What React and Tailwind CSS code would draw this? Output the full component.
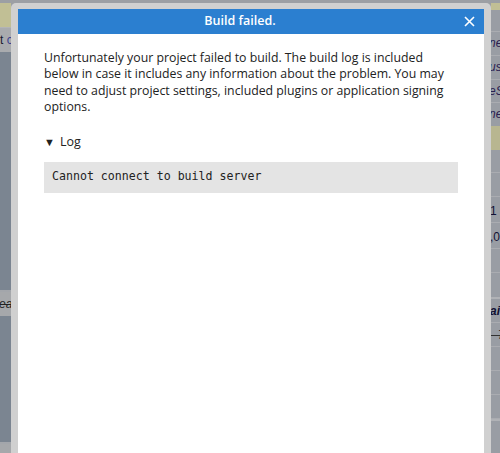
export default function App() {
  const leftRows = (
    <div className="w-[11px] shrink-0 flex flex-col overflow-hidden bg-[#7b8591]">
      <div className="h-[3px] bg-[#9c9fa4]" />
      <div className="h-[24px] bg-[#c1bf95]" />
      <div className="h-[1px] bg-[#b3b4b6]" />
      <div className="h-[24px] bg-[#a9abae] text-[12px] leading-[24px] whitespace-nowrap text-[#1a1a2e] font-['Liberation_Sans',sans-serif]">
        t <span className="text-[#3a3f8f]">c</span>
      </div>
      <div className="h-[238px]" />
      <div className="h-[2px] bg-[#a3a6ab]" />
      <div className="h-[24px] bg-[#a6a8ab] text-[12px] leading-[24px] whitespace-nowrap text-[#222] italic line-through font-['Liberation_Sans',sans-serif] -ml-[1px]">
        ea
      </div>
      <div className="h-[126px]" />
      <div className="h-[2px] bg-[#a3a6ab]" />
      <div className="flex-1 bg-[#a6a8ab]" />
    </div>
  );

  const rightRows = (
    <div className="w-[9px] shrink-0 flex flex-col overflow-hidden bg-[#999da4] text-[12px] italic whitespace-nowrap text-[#2a2050] font-['Liberation_Sans',sans-serif]">
      <div className="h-[3px] bg-[#9c9fa4]" />
      <div className="h-[7px] bg-[#c1bf95]" />
      <div className="h-[22px] border-b border-[#aaacb1]" />
      <div className="h-[24px] leading-[22px] border-b border-[#aaacb1] -ml-[2px]">ne</div>
      <div className="h-[24px] leading-[22px] border-b border-[#aaacb1] -ml-[2px]">us</div>
      <div className="h-[23px] leading-[22px] border-b border-[#aaacb1] -ml-[2px]">eS</div>
      <div className="h-[23px] leading-[22px] -ml-[2px]">ne</div>
      <div className="h-[24px] bg-[#b8b690]" />
      <div className="h-[23px] border-b border-[#aaacb1]" />
      <div className="h-[24px] border-b border-[#aaacb1]" />
      <div className="h-[26px] leading-[28px] not-italic border-b border-[#aaacb1] text-[#111133] -ml-[1px]">1</div>
      <div className="h-[26px] leading-[28px] not-italic border-b border-[#aaacb1] text-[#111133] -ml-[1px]">,0</div>
      <div className="h-[24px] border-b border-[#aaacb1]" />
      <div className="h-[24px]" />
      <div className="h-[2px] bg-[#b0b2b6]" />
      <div className="h-[24px] leading-[24px] font-bold border-b border-[#aaacb1] text-[#111133] -ml-[1px]">ai</div>
      <div className="h-[24px] leading-[24px] line-through border-b border-[#aaacb1] text-[#333] ">–7</div>
      <div className="h-[24px] border-b border-[#aaacb1]" />
      <div className="h-[24px] border-b border-[#aaacb1]" />
      <div className="h-[24px] border-b border-[#aaacb1]" />
      <div className="h-[2px] bg-[#b0b2b6]" />
      <div className="flex-1" />
    </div>
  );

  return (
    <div className="w-[500px] h-[453px] flex overflow-hidden bg-[#9c9fa4]">
      {leftRows}
      <div className="w-[480px] shrink-0 mt-[3px] bg-[#d0d0d0] rounded-t-[5px] px-[7px] pt-[6px] flex flex-col">
        <div className="h-[25px] bg-[#2b7fd0] flex items-center relative font-['Open_Sans',sans-serif]">
          <div className="flex-1 text-center text-white text-[12.5px] font-semibold pr-[22px]">Build failed.</div>
          <button className="absolute right-[9px] top-[7px] w-[11px] h-[11px] text-white">
            <svg viewBox="0 0 11 11" width="11" height="11" fill="none" stroke="currentColor" strokeWidth="1.6">
              <path d="M1 1L10 10M10 1L1 10" />
            </svg>
          </button>
        </div>
        <div className="flex-1 bg-white px-[26px] pt-[16px] font-['Open_Sans',sans-serif] text-[#222]">
          <p className="text-[12.3px] leading-[16.4px] whitespace-nowrap">
            Unfortunately your project failed to build. The build log is included
            <br />
            below in case it includes any information about the problem. You may
            <br />
            need to adjust project settings, included plugins or application signing
            <br />
            options.
          </p>
          <div className="mt-[18px] flex items-center gap-[5px] text-[12.5px] leading-[16px]">
            <span className="text-[11px] leading-[16px]">▼</span>
            <span>Log</span>
          </div>
          <div className="mt-[12px] h-[31px] bg-[#e4e4e4] px-[8px] flex items-center font-['DejaVu_Sans_Mono',monospace] text-[11.6px] text-[#222]">
            Cannot connect to build server
          </div>
        </div>
      </div>
      {rightRows}
    </div>
  );
}
